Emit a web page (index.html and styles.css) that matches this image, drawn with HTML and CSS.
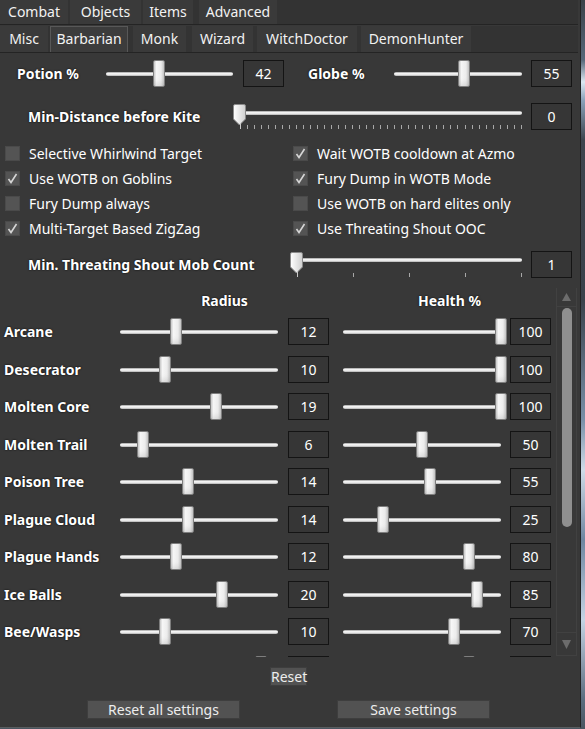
FILE: index.html
```html
<!DOCTYPE html>
<html>
<head>
<meta charset="utf-8">
<link rel="stylesheet" href="styles.css">
</head>
<body>
<div class="window">
  <div class="tabs tabs-main">
    <div class="tab t-combat">Combat</div>
    <div class="tab t-objects">Objects</div>
    <div class="tab t-items">Items</div>
    <div class="tab t-adv">Advanced</div>
  </div>
  <div class="tabs tabs-sub">
    <div class="tab t-misc">Misc</div>
    <div class="tab t-barb active">Barbarian</div>
    <div class="tab t-monk">Monk</div>
    <div class="tab t-wiz">Wizard</div>
    <div class="tab t-wd">WitchDoctor</div>
    <div class="tab t-dh">DemonHunter</div>
  </div>

  <div class="panel">
    <div class="row row-top">
      <span class="lbl lbl-potion">Potion %</span>
      <div class="slider s-potion" style="--p:42%"><div class="track"></div><div class="thumb"></div></div>
      <div class="val v-potion">42</div>
      <span class="lbl lbl-globe">Globe %</span>
      <div class="slider s-globe" style="--p:55%"><div class="track"></div><div class="thumb"></div></div>
      <div class="val v-globe">55</div>
    </div>

    <div class="row row-dist">
      <span class="lbl lbl-dist">Min-Distance before Kite</span>
      <div class="tslider s-dist">
        <div class="track"></div>
        <svg class="pthumb" width="14" height="22" viewBox="0 0 14 22"><defs><linearGradient id="g1" x1="0" y1="0" x2="1" y2="0"><stop offset="0" stop-color="#ffffff"/><stop offset="1" stop-color="#cfcfcf"/></linearGradient></defs><path d="M0.5 2 Q0.5 0.5 2 0.5 H11 Q12.5 0.5 12.5 2 V15 L6.5 21 L0.5 15 Z" fill="url(#g1)" stroke="#8a8a8a"/></svg>
        <div class="ticks">
          <i class="first"></i><i></i><i></i><i></i><i></i><i></i><i></i><i></i><i></i><i></i>
          <i></i><i></i><i></i><i></i><i></i><i></i><i></i><i></i><i></i><i></i>
          <i></i><i></i><i></i><i></i><i></i><i></i><i></i><i></i><i></i><i></i>
          <i></i><i></i><i></i><i></i><i></i><i></i><i></i><i></i><i></i><i></i><i></i>
        </div>
      </div>
      <div class="val">0</div>
    </div>

    <div class="checks">
      <label class="chk"><span class="box"></span>Selective Whirlwind Target</label>
      <label class="chk"><span class="box on"><svg width="15" height="15" viewBox="0 0 15 15"><path d="M3.5 8 L6 11.5 L11.5 3" fill="none" stroke="#d6d6d6" stroke-width="1.6"/></svg></span>Wait WOTB cooldown at Azmo</label>
      <label class="chk"><span class="box on"><svg width="15" height="15" viewBox="0 0 15 15"><path d="M3.5 8 L6 11.5 L11.5 3" fill="none" stroke="#d6d6d6" stroke-width="1.6"/></svg></span>Use WOTB on Goblins</label>
      <label class="chk"><span class="box on"><svg width="15" height="15" viewBox="0 0 15 15"><path d="M3.5 8 L6 11.5 L11.5 3" fill="none" stroke="#d6d6d6" stroke-width="1.6"/></svg></span>Fury Dump in WOTB Mode</label>
      <label class="chk"><span class="box"></span>Fury Dump always</label>
      <label class="chk"><span class="box"></span>Use WOTB on hard elites only</label>
      <label class="chk"><span class="box on"><svg width="15" height="15" viewBox="0 0 15 15"><path d="M3.5 8 L6 11.5 L11.5 3" fill="none" stroke="#d6d6d6" stroke-width="1.6"/></svg></span>Multi-Target Based ZigZag</label>
      <label class="chk"><span class="box on"><svg width="15" height="15" viewBox="0 0 15 15"><path d="M3.5 8 L6 11.5 L11.5 3" fill="none" stroke="#d6d6d6" stroke-width="1.6"/></svg></span>Use Threating Shout OOC</label>
    </div>

    <div class="row row-mob">
      <span class="lbl lbl-mob">Min. Threating Shout Mob Count</span>
      <div class="tslider s-mob">
        <div class="track"></div>
        <svg class="pthumb" width="14" height="22" viewBox="0 0 14 22"><defs><linearGradient id="g2" x1="0" y1="0" x2="1" y2="0"><stop offset="0" stop-color="#ffffff"/><stop offset="1" stop-color="#cfcfcf"/></linearGradient></defs><path d="M0.5 2 Q0.5 0.5 2 0.5 H11 Q12.5 0.5 12.5 2 V15 L6.5 21 L0.5 15 Z" fill="url(#g2)" stroke="#8a8a8a"/></svg>
        <div class="ticks"><i class="first"></i><i></i><i></i><i></i><i></i></div>
      </div>
      <div class="val">1</div>
    </div>

    <div class="table">
      <div class="rows">
        <div class="trow thead">
          <span></span>
          <span class="hcell">Radius</span>
          <span class="hcell">Health %</span>
        </div>
        <div class="trow"><span class="name">Arcane</span>
          <div class="slider ts" style="--p:35.7%"><div class="track"></div><div class="thumb"></div></div><div class="val">12</div>
          <div class="slider ts" style="--p:100%"><div class="track"></div><div class="thumb"></div></div><div class="val">100</div></div>
        <div class="trow"><span class="name">Desecrator</span>
          <div class="slider ts" style="--p:28.6%"><div class="track"></div><div class="thumb"></div></div><div class="val">10</div>
          <div class="slider ts" style="--p:100%"><div class="track"></div><div class="thumb"></div></div><div class="val">100</div></div>
        <div class="trow"><span class="name">Molten Core</span>
          <div class="slider ts" style="--p:60.7%"><div class="track"></div><div class="thumb"></div></div><div class="val">19</div>
          <div class="slider ts" style="--p:100%"><div class="track"></div><div class="thumb"></div></div><div class="val">100</div></div>
        <div class="trow"><span class="name">Molten Trail</span>
          <div class="slider ts" style="--p:14.3%"><div class="track"></div><div class="thumb"></div></div><div class="val">6</div>
          <div class="slider ts" style="--p:50%"><div class="track"></div><div class="thumb"></div></div><div class="val">50</div></div>
        <div class="trow"><span class="name">Poison Tree</span>
          <div class="slider ts" style="--p:42.9%"><div class="track"></div><div class="thumb"></div></div><div class="val">14</div>
          <div class="slider ts" style="--p:55%"><div class="track"></div><div class="thumb"></div></div><div class="val">55</div></div>
        <div class="trow"><span class="name">Plague Cloud</span>
          <div class="slider ts" style="--p:42.9%"><div class="track"></div><div class="thumb"></div></div><div class="val">14</div>
          <div class="slider ts" style="--p:25%"><div class="track"></div><div class="thumb"></div></div><div class="val">25</div></div>
        <div class="trow"><span class="name">Plague Hands</span>
          <div class="slider ts" style="--p:35.7%"><div class="track"></div><div class="thumb"></div></div><div class="val">12</div>
          <div class="slider ts" style="--p:80%"><div class="track"></div><div class="thumb"></div></div><div class="val">80</div></div>
        <div class="trow"><span class="name">Ice Balls</span>
          <div class="slider ts" style="--p:64.3%"><div class="track"></div><div class="thumb"></div></div><div class="val">20</div>
          <div class="slider ts" style="--p:85%"><div class="track"></div><div class="thumb"></div></div><div class="val">85</div></div>
        <div class="trow"><span class="name">Bee/Wasps</span>
          <div class="slider ts" style="--p:28.6%"><div class="track"></div><div class="thumb"></div></div><div class="val">10</div>
          <div class="slider ts" style="--p:70%"><div class="track"></div><div class="thumb"></div></div><div class="val">70</div></div>
        <div class="trow"><span class="name"></span>
          <div class="slider ts" style="--p:89.3%"><div class="track"></div><div class="thumb"></div></div><div class="val"></div>
          <div class="slider ts" style="--p:80%"><div class="track"></div><div class="thumb"></div></div><div class="val"></div></div>
      </div>
      <div class="scrollbar">
        <div class="sb-btn"><svg width="19" height="18" viewBox="0 0 19 18"><path d="M9.5 5 L14 13 L5 13 Z" fill="#6c6c6c"/></svg></div>
        <div class="sb-track"><div class="sb-thumb"></div></div>
        <div class="sb-btn"><svg width="19" height="22" viewBox="0 0 19 22"><path d="M5 7 L14 7 L9.5 16 Z" fill="#6c6c6c"/></svg></div>
      </div>
    </div>

    <div class="reset-row"><button class="btn btn-reset">Reset</button></div>
    <div class="bottom-row">
      <button class="btn btn-wide">Reset all settings</button>
      <button class="btn btn-wide">Save settings</button>
    </div>
  </div>
</div>
</body>
</html>
```

FILE: styles.css
```css
* { box-sizing: border-box; }
html, body { margin: 0; padding: 0; }
body {
  width: 585px;
  height: 729px;
  overflow: hidden;
  font-family: "Noto Sans", "Open Sans", sans-serif;
  font-size: 14px;
  color: #fff;
  background: linear-gradient(to bottom, #3a4148 0px, #56687a 60px, #dce8f2 82px, #8aa2ba 100px, #3d454e 140px, #3a424b 300px, #7890a8 420px, #cfdce8 470px, #6e86a0 540px, #c4d4e4 620px, #5a6c7e 700px, #4a5560 729px);
}
.window {
  width: 581px;
  height: 728px;
  background: #383838;
  border-right: 1px solid #232323;
  border-bottom: 1px solid #5a5e60;
  overflow: hidden;
}

/* tabs */
.tabs {
  display: flex;
  background: #333333;
  width: 578px;
}
.tabs-main {
  height: 25px;
  border-bottom: 1px solid #242424;
}
.tabs-sub {
  margin-top: 1px;
  height: 27px;
  border-bottom: 1px solid #242424;
}
.tab {
  display: flex;
  align-items: center;
  justify-content: center;
  padding-bottom: 1px;
  background: #3a3a3a;
  color: #f2f2f2;
  line-height: 1;
  white-space: nowrap;
  flex: none;
}
.t-combat { width: 68px; }
.t-objects { width: 71px; margin-left: 2px; }
.t-items { width: 50px; margin-left: 2px; }
.t-adv { width: 78px; margin-left: 6px; }

.t-misc { width: 48px; }
.t-barb { width: 78px; margin-left: 2px; }
.t-monk { width: 53px; margin-left: 5px; }
.t-wiz { width: 61px; margin-left: 6px; }
.t-wd { width: 100px; margin-left: 4px; }
.t-dh { width: 110px; margin-left: 4px; }
.tabs-sub .tab.active {
  background: #3c3c3c;
  border: 1px solid #585858;
  border-bottom: none;
}

/* panel */
.panel {
  display: flex;
  flex-direction: column;
}
.row {
  display: flex;
  align-items: center;
  height: 27px;
}
.lbl {
  font-weight: bold;
  color: #fff;
  text-shadow: 0 0 2px #000;
  white-space: nowrap;
}
.row-top { margin-top: 7px; padding-left: 17px; }
.lbl-potion { width: 89px; }
.s-potion { width: 127px; }
.v-potion { margin-left: 10px; }
.lbl-globe { margin-left: 24px; width: 86px; }
.s-globe { width: 128px; }
.v-globe { margin-left: 9px; }

.val {
  width: 41px;
  height: 27px;
  border: 1px solid #141414;
  background: #363636;
  display: flex;
  align-items: center;
  justify-content: center;
  color: #fff;
  flex: none;
}

/* plain slider */
.slider {
  position: relative;
  height: 27px;
  flex: none;
}
.track {
  position: absolute;
  left: 0;
  right: 0;
  top: 12px;
  height: 4px;
  border-radius: 2px;
  background: linear-gradient(to bottom, #9a9a9a 0, #f4f4f4 35%, #e6e6e6 70%, #a9a9a9 100%);
}
.thumb {
  position: absolute;
  top: 0;
  left: calc(var(--p) - 6px);
  width: 12px;
  height: 27px;
  border: 1px solid #7e7e7e;
  border-radius: 2px;
  background: linear-gradient(to right, #c9c9c9 0, #f6f6f6 25%, #ececec 70%, #c4c4c4 100%);
  box-shadow: inset 0 -6px 6px -4px rgba(0,0,0,0.12);
}

/* tick slider */
.row-dist { margin-top: 16px; padding-left: 28px; }
.lbl-dist { width: 205px; }
.s-dist { width: 289px; }
.tslider {
  position: relative;
  height: 27px;
  flex: none;
  margin-right: 9px;
}
.tslider .track { left: 6px; top: 8px; }
.pthumb {
  position: absolute;
  left: 0;
  top: 1px;
}
.ticks {
  position: absolute;
  left: 7px;
  right: 0;
  top: 22px;
  height: 5px;
  display: flex;
  justify-content: space-between;
}
.ticks i {
  display: block;
  width: 1px;
  height: 4px;
  background: #a8a8a8;
}
.ticks i.first { height: 6px; margin-top: -2px; background: #c8c8c8; }

/* checkboxes */
.checks {
  margin-top: 11px;
  display: grid;
  grid-template-columns: 288px 1fr;
  padding-left: 5px;
}
.chk {
  display: flex;
  align-items: center;
  height: 25px;
  color: #fff;
  white-space: nowrap;
}
.box {
  width: 15px;
  height: 15px;
  background: #545454;
  border: 1px solid #4a4a4a;
  margin-right: 9px;
  flex: none;
  display: block;
  position: relative;
}
.box svg { position: absolute; left: -1px; top: -1px; }

.row-mob { margin-top: 10px; padding-left: 28px; }
.lbl-mob { width: 262px; }
.s-mob { width: 232px; }
.s-mob .track { top: 7px; }

/* table */
.table {
  margin-top: 10px;
  height: 369px;
  display: flex;
  overflow: hidden;
}
.rows {
  width: 556px;
  overflow: hidden;
}
.trow {
  display: grid;
  grid-template-columns: 120px 158px 51px 172px 50px;
  align-items: center;
  height: 37.5px;
}
.trow > .val { margin-left: 10px; }
.trow > .val + .slider { margin-left: 14px; }
.trow > .val:last-child { margin-left: 9px; }
.thead {
  height: 25px;
  grid-template-columns: 120px 209px 227px;
}
.hcell {
  text-align: center;
  font-weight: bold;
  text-shadow: 0 0 2px #000;
}
.hcell:last-child { padding-left: 14px; }
.name {
  padding-left: 4px;
  font-weight: bold;
  text-shadow: 0 0 2px #000;
  white-space: nowrap;
}

/* scrollbar */
.scrollbar {
  width: 21px;
  height: 369px;
  margin-top: -1px;
  border: 1px solid #414141;
  display: flex;
  flex-direction: column;
}
.sb-btn {
  height: 19px;
  flex: none;
  border-bottom: 1px solid #414141;
}
.sb-btn:last-child {
  height: 23px;
  border-bottom: none;
  border-top: 1px solid #414141;
}
.sb-track {
  flex: 1;
  padding: 1px 0 0 5px;
}
.sb-thumb {
  width: 10px;
  height: 219px;
  border-radius: 5px;
  background: #8f8f8f;
}

/* buttons */
.btn {
  font-family: inherit;
  font-size: 14px;
  color: #ededed;
  background: #525252;
  border: 1px solid #3e3e3e;
  height: 19px;
  padding: 0;
  line-height: 17px;
}
.reset-row {
  margin-top: 10px;
  display: flex;
  padding-left: 270px;
}
.btn-reset { width: 37px; }
.bottom-row {
  margin-top: 14px;
  display: flex;
  gap: 97px;
  padding-left: 87px;
}
.btn-wide { width: 153px; }
```
